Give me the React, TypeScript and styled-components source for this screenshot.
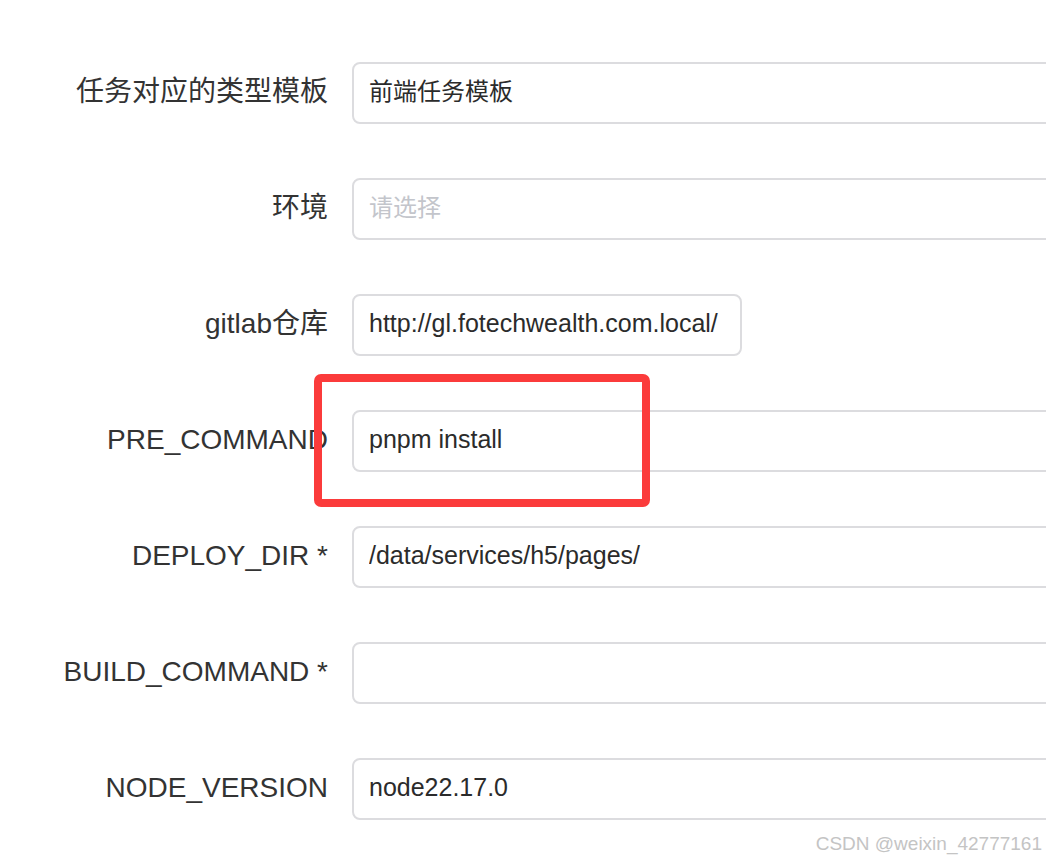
import React from "react";
import styled, { createGlobalStyle } from "styled-components";

const Global = createGlobalStyle`
  html, body { margin: 0; padding: 0; background: #ffffff; overflow: hidden; }
  body { font-family: "Liberation Sans", "Noto Sans CJK SC", Arial, sans-serif; }
`;

const Page = styled.div`
  position: relative;
  width: 1046px;
  height: 862px;
  overflow: hidden;
  background: #fff;
`;

const Form = styled.div`
  display: grid;
  grid-template-columns: 328px auto;
  column-gap: 24px;
  row-gap: 54px;
  padding-top: 62px;
  align-items: center;
`;

const Label = styled.div`
  text-align: right;
  font-size: 28px;
  line-height: 1.3;
  margin-top: -2px;
  color: #333333;
  white-space: nowrap;
  font-family: "Liberation Sans", "Noto Sans CJK SC", Arial, sans-serif;
`;

const Field = styled.div<{ $width?: number }>`
  box-sizing: border-box;
  width: ${(p) => (p.$width ? `${p.$width}px` : "760px")};
  height: 62px;
  border: 2px solid #dcdcdf;
  border-radius: 8px;
  padding: 0 15px;
  display: flex;
  align-items: center;
`;

const Value = styled.div<{ $cjk?: boolean }>`
  flex: 1;
  min-width: 0;
  overflow: hidden;
  white-space: nowrap;
  font-size: ${(p) => (p.$cjk ? "24px" : "25px")};
  line-height: 1.35;
  margin-top: -2px;
  color: #2b2b2b;
  font-family: "Liberation Sans", "Noto Sans CJK SC", Arial, sans-serif;
`;

const Placeholder = styled.span`
  color: #c3c5cb;
`;

const Highlight = styled.div`
  position: absolute;
  left: 314px;
  top: 374px;
  width: 336px;
  height: 133px;
  box-sizing: border-box;
  border: 8px solid #fb3b3b;
  border-radius: 7px;
  pointer-events: none;
`;

const Watermark = styled.div`
  position: absolute;
  right: 4px;
  top: 833px;
  font-size: 19px;
  color: #c4c4c4;
  font-family: "Liberation Sans", Arial, sans-serif;
`;

type Row = { label: string; value?: string; placeholder?: string; width?: number; cjk?: boolean };

const rows: Row[] = [
  { label: "任务对应的类型模板", value: "前端任务模板", cjk: true },
  { label: "环境", placeholder: "请选择", cjk: true },
  { label: "gitlab仓库", value: "http://gl.fotechwealth.com.local/", width: 390 },
  { label: "PRE_COMMAND", value: "pnpm install" },
  { label: "DEPLOY_DIR *", value: "/data/services/h5/pages/" },
  { label: "BUILD_COMMAND *", value: "" },
  { label: "NODE_VERSION", value: "node22.17.0" },
];

export default function App() {
  return (
    <Page>
      <Global />
      <Form>
        {rows.map((r) => (
          <React.Fragment key={r.label}>
            <Label>{r.label}</Label>
            <Field $width={r.width}>
              <Value $cjk={r.cjk}>
                {r.placeholder ? <Placeholder>{r.placeholder}</Placeholder> : r.value}
              </Value>
            </Field>
          </React.Fragment>
        ))}
      </Form>
      <Highlight />
      <Watermark>CSDN @weixin_42777161</Watermark>
    </Page>
  );
}
